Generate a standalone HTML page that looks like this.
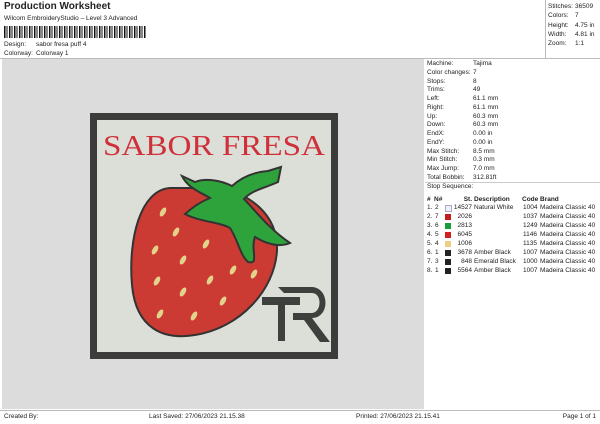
<!DOCTYPE html>
<html><head><style>
body{margin:0;width:600px;height:424px;background:#fff;font-family:"Liberation Sans",sans-serif;color:#222;position:relative;overflow:hidden;font-size:6.5px}
.a{position:absolute;white-space:nowrap}
.r{position:absolute;left:427px;line-height:8.75px}
.row{position:absolute;left:0;width:600px;height:9px;line-height:9px}
.row span{position:absolute}
.sw{display:inline-block;width:6px;height:6px;top:1.5px}
</style></head><body>
<div class="a" style="left:4px;top:1px;font-size:10px;font-weight:bold">Production Worksheet</div>
<div class="a" style="left:4px;top:15px">Wilcom EmbroideryStudio – Level 3 Advanced</div>
<div class="a" style="left:4px;top:26px;width:142px;height:12px;background:repeating-linear-gradient(90deg,#111 0 1.5px,#fff 1.5px 2.5px,#111 2.5px 3.5px,#fff 3.5px 5px)"></div>
<div class="a" style="left:4px;top:41px">Design:</div><div class="a" style="left:36px;top:41px">sabor fresa puff 4</div>
<div class="a" style="left:4px;top:50px">Colorway:</div><div class="a" style="left:36px;top:50px">Colorway 1</div>
<div class="a" style="left:0;top:58px;width:600px;border-top:1px solid #bbb"></div>
<div class="a" style="left:545px;top:0;height:58px;border-left:1px solid #bbb"></div>
<div class="a" style="left:548px;top:2px;line-height:9.3px">Stitches:<br>Colors:<br>Height:<br>Width:<br>Zoom:</div>
<div class="a" style="left:575px;top:2px;line-height:9.3px">36509<br>7<br>4.75 in<br>4.81 in<br>1:1</div>
<div class="a" style="left:2px;top:59px;width:422px;height:350px;background:#dcdcdc"></div>
<div class="a" style="left:0;top:410px;width:600px;border-top:1px solid #bbb"></div>
<div class="a" style="left:4px;top:413px">Created By:</div>
<div class="a" style="left:149px;top:413px">Last Saved: 27/06/2023 21.15.38</div>
<div class="a" style="left:356px;top:413px">Printed: 27/06/2023 21.15.41</div>
<div class="a" style="right:4px;top:413px">Page 1 of 1</div>
<div class="r" style="top:60px">Machine:<br>Color changes:<br>Stops:<br>Trims:<br>Left:<br>Right:<br>Up:<br>Down:<br>EndX:<br>EndY:<br>Max Stitch:<br>Min Stitch:<br>Max Jump:<br>Total Bobbin:</div>
<div class="r" style="top:60px;left:473px">Tajima<br>7<br>8<br>49<br>61.1 mm<br>61.1 mm<br>60.3 mm<br>60.3 mm<br>0.00 in<br>0.00 in<br>8.5 mm<br>0.3 mm<br>7.0 mm<br>312.81ft</div>
<div class="a" style="left:425px;top:182px;width:175px;border-top:1px solid #ccc"></div>
<div class="a" style="left:427px;top:183px">Stop Sequence:</div>
<div class="row" style="top:195px;font-weight:bold;text-decoration:underline"><span style="left:427px">#</span><span style="left:434px">N#</span><span style="right:128px">St.</span><span style="left:474px">Description</span><span style="left:522px">Code</span><span style="left:540px">Brand</span></div>
<div class="row" style="top:203px"><span style="left:427px">1.</span><span style="left:435px">2</span><span class="sw" style="left:445px;border:1px solid #aab;background:#eef;width:5px;height:5px"></span><span style="right:128px">14527</span><span style="left:474px">Natural White</span><span style="left:523px">1004</span><span style="left:540px">Madeira Classic 40</span></div>
<div class="row" style="top:212px"><span style="left:427px">2.</span><span style="left:435px">7</span><span class="sw" style="left:445px;background:#c41c1c"></span><span style="right:128px">2026</span><span style="left:523px">1037</span><span style="left:540px">Madeira Classic 40</span></div>
<div class="row" style="top:221px"><span style="left:427px">3.</span><span style="left:435px">6</span><span class="sw" style="left:445px;background:#1a9c3a"></span><span style="right:128px">2813</span><span style="left:523px">1249</span><span style="left:540px">Madeira Classic 40</span></div>
<div class="row" style="top:230px"><span style="left:427px">4.</span><span style="left:435px">5</span><span class="sw" style="left:445px;background:#d02020"></span><span style="right:128px">6045</span><span style="left:523px">1146</span><span style="left:540px">Madeira Classic 40</span></div>
<div class="row" style="top:239px"><span style="left:427px">5.</span><span style="left:435px">4</span><span class="sw" style="left:445px;background:#f0d080"></span><span style="right:128px">1006</span><span style="left:523px">1135</span><span style="left:540px">Madeira Classic 40</span></div>
<div class="row" style="top:248px"><span style="left:427px">6.</span><span style="left:435px">1</span><span class="sw" style="left:445px;background:#222"></span><span style="right:128px">3678</span><span style="left:474px">Amber Black</span><span style="left:523px">1007</span><span style="left:540px">Madeira Classic 40</span></div>
<div class="row" style="top:257px"><span style="left:427px">7.</span><span style="left:435px">3</span><span class="sw" style="left:445px;background:#222"></span><span style="right:128px">848</span><span style="left:474px">Emerald Black</span><span style="left:523px">1000</span><span style="left:540px">Madeira Classic 40</span></div>
<div class="row" style="top:266px"><span style="left:427px">8.</span><span style="left:435px">1</span><span class="sw" style="left:445px;background:#222"></span><span style="right:128px">5564</span><span style="left:474px">Amber Black</span><span style="left:523px">1007</span><span style="left:540px">Madeira Classic 40</span></div>
<svg class="a" style="left:0;top:0" width="425" height="410">
<rect x="90" y="113" width="248" height="246" fill="#3c3d3a"/>
<rect x="97" y="120" width="234" height="232" fill="#dcdfd8"/>
<text x="214" y="155" text-anchor="middle" font-family="Liberation Serif" font-size="29" fill="#d0303a" textLength="222" lengthAdjust="spacingAndGlyphs">SABOR FRESA</text>
<path d="M170 188 C140 190 128 240 132 285 C136 330 165 340 195 335 C240 328 275 290 277 250 C278 215 250 192 215 188 Z" fill="#cc3b33" stroke="#333" stroke-width="2"/>
<path d="M182 176 L195 182 C205 178 220 180 232 186 C243 176 255 172 268 171 L281 167 L278 182 C265 188 252 190 244 199 C255 210 268 228 290 243 C278 248 265 243 255 237 C250 250 260 265 248 262 C240 255 238 240 230 228 C220 222 200 222 185 214 C195 205 205 200 210 198 C200 192 188 188 182 176 Z" fill="#2ea33c" stroke="#333" stroke-width="2"/>
<g fill="#e3d28a">
<ellipse cx="163" cy="212" rx="2.5" ry="5" transform="rotate(30 163 212)"/>
<ellipse cx="176" cy="232" rx="2.5" ry="5" transform="rotate(30 176 232)"/>
<ellipse cx="206" cy="244" rx="2.5" ry="5" transform="rotate(30 206 244)"/>
<ellipse cx="155" cy="250" rx="2.5" ry="5" transform="rotate(30 155 250)"/>
<ellipse cx="183" cy="260" rx="2.5" ry="5" transform="rotate(30 183 260)"/>
<ellipse cx="233" cy="270" rx="2.5" ry="5" transform="rotate(30 233 270)"/>
<ellipse cx="254" cy="274" rx="2.5" ry="5" transform="rotate(30 254 274)"/>
<ellipse cx="157" cy="281" rx="2.5" ry="5" transform="rotate(30 157 281)"/>
<ellipse cx="210" cy="280" rx="2.5" ry="5" transform="rotate(30 210 280)"/>
<ellipse cx="183" cy="292" rx="2.5" ry="5" transform="rotate(30 183 292)"/>
<ellipse cx="223" cy="301" rx="2.5" ry="5" transform="rotate(30 223 301)"/>
<ellipse cx="160" cy="314" rx="2.5" ry="5" transform="rotate(30 160 314)"/>
<ellipse cx="194" cy="316" rx="2.5" ry="5" transform="rotate(30 194 316)"/>
</g>
<g fill="#3d403c">
<path d="M262 297 L300 297 L300 305 L285 305 L285 341 L278 341 L278 305 L262 305 Z"/>
<path d="M278 287 L312 287 C330 288 330 318 312 318 L330 342 L320 342 L304 320 L293 320 L293 313 L312 313 C322 312 322 293 312 293 L284 293 Z"/>
</g>
</svg>
</body></html>
